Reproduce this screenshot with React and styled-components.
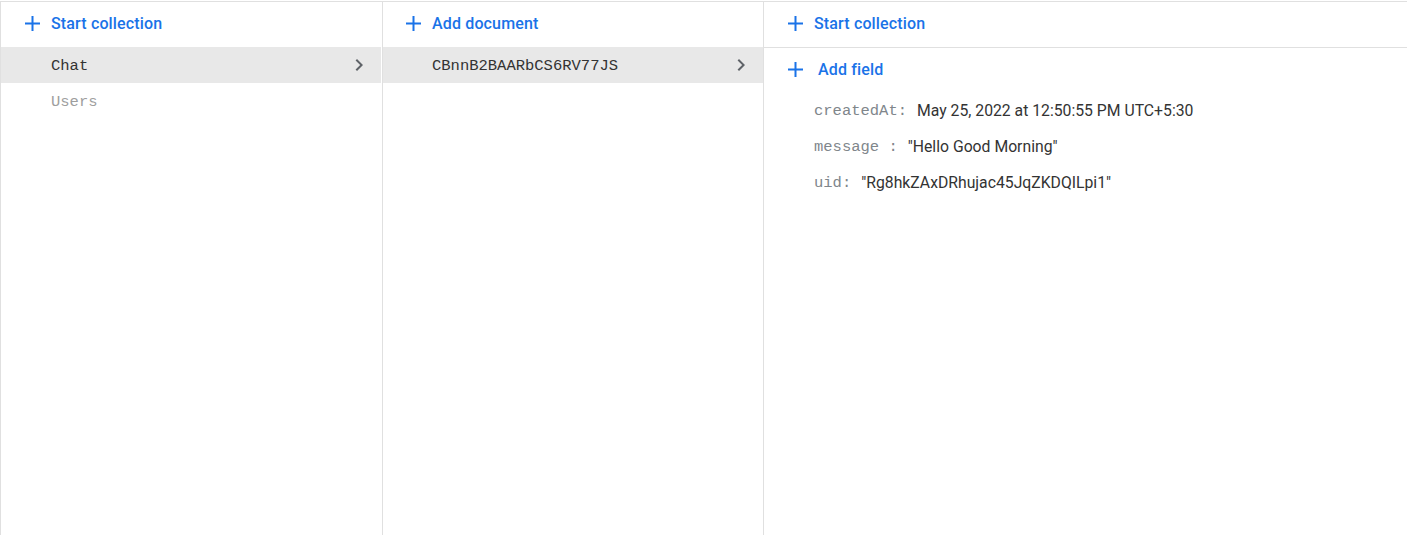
import React from "react";
import styled, { createGlobalStyle } from "styled-components";

const Global = createGlobalStyle`
  html, body { margin: 0; padding: 0; background: #fff; }
  body { font-family: Roboto, "Noto Sans", sans-serif; }
`;

const BORDER = "#e0e0e0";
const BLUE = "#1a73e8";

const Frame = styled.div`
  margin-top: 1px;
  height: 534px;
  box-sizing: border-box;
  border-top: 1px solid ${BORDER};
  border-left: 1px solid ${BORDER};
  display: flex;
  overflow: hidden;
`;

const Column = styled.div`
  width: ${(p) => (p.$w ? `${p.$w}px` : "auto")};
  flex: ${(p) => (p.$w ? "none" : "1")};
  border-right: ${(p) => (p.$last ? "none" : `1px solid ${BORDER}`)};
  padding-right: ${(p) => p.$pr || 0}px;
  display: flex;
  flex-direction: column;
`;

const Header = styled.div`
  box-sizing: content-box;
  flex: none;
  display: flex;
  align-items: center;
  padding: 0 0 3px ${(p) => p.$pl || 24}px;
  height: 42px;
  border-bottom: ${(p) => (p.$line ? `1px solid ${BORDER}` : "none")};
`;

const Action = styled.button`
  all: unset;
  display: flex;
  align-items: center;
  gap: ${(p) => p.$gap || 11}px;
  color: ${BLUE};
  font-family: Roboto, sans-serif;
  font-weight: 500;
  font-size: 16px;
  letter-spacing: 0.15px;
  cursor: pointer;
`;

const PlusIcon = () => (
  <svg width="15" height="15" viewBox="0 0 15 15">
    <path d="M7.5 0v15M0 7.5h15" stroke={BLUE} strokeWidth="2" fill="none" />
  </svg>
);

const Chevron = () => (
  <svg width="24" height="24" viewBox="0 0 24 24">
    <path d="M10 6L8.59 7.41 13.17 12l-4.58 4.59L10 18l6-6z" fill="#5f6368" />
  </svg>
);

const Row = styled.div`
  height: 36px;
  box-sizing: border-box;
  display: flex;
  align-items: center;
  justify-content: space-between;
  padding: 0 10px 0 ${(p) => p.$pl}px;
  background: ${(p) => (p.$selected ? "#e8e8e8" : "transparent")};
  font-family: "Liberation Mono", "DejaVu Sans Mono", monospace;
  font-size: 15.5px;
  color: ${(p) => (p.$selected ? "#333" : "#9e9e9e")};
`;

const Label = styled.span`
  padding-top: 2px;
`;

const AddFieldRow = styled.div`
  height: 44px;
  box-sizing: border-box;
  padding: 0 0 2px 24px;
  display: flex;
  align-items: center;
`;

const Fields = styled.div`
  display: flex;
  flex-direction: column;
`;

const Field = styled.div`
  height: 36px;
  display: flex;
  align-items: center;
  padding-left: 50px;
  gap: 10px;
`;

const Key = styled.span`
  font-family: "Liberation Mono", "DejaVu Sans Mono", monospace;
  font-size: 15.5px;
  color: #80868b;
  padding-top: 2px;
`;

const Value = styled.span`
  font-family: Roboto, sans-serif;
  font-size: 15.75px;
  color: #333;
`;

export default function App() {
  return (
    <>
      <Global />
      <Frame>
        <Column $w={380} $pr={1}>
          <Header>
            <Action>
              <PlusIcon />
              Start collection
            </Action>
          </Header>
          <Row $selected $pl={50}>
            <Label>Chat</Label>
            <Chevron />
          </Row>
          <Row $pl={50}>
            <Label>Users</Label>
          </Row>
        </Column>
        <Column $w={380}>
          <Header $pl={23}>
            <Action>
              <PlusIcon />
              Add document
            </Action>
          </Header>
          <Row $selected $pl={49}>
            <Label>CBnnB2BAARbCS6RV77JS</Label>
            <Chevron />
          </Row>
        </Column>
        <Column $last>
          <Header $line>
            <Action>
              <PlusIcon />
              Start collection
            </Action>
          </Header>
          <AddFieldRow>
            <Action $gap={15}>
              <PlusIcon />
              Add field
            </Action>
          </AddFieldRow>
          <Fields>
            <Field>
              <Key>createdAt:</Key>
              <Value>May 25, 2022 at 12:50:55 PM UTC+5:30</Value>
            </Field>
            <Field>
              <Key>message :</Key>
              <Value>"Hello Good Morning"</Value>
            </Field>
            <Field>
              <Key>uid:</Key>
              <Value>"Rg8hkZAxDRhujac45JqZKDQILpi1"</Value>
            </Field>
          </Fields>
        </Column>
      </Frame>
    </>
  );
}
